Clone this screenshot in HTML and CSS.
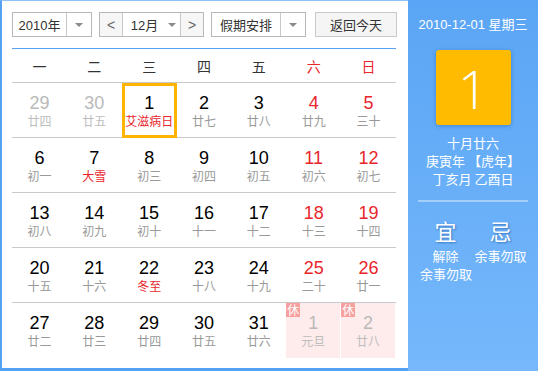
FILE: index.html
```html
<!DOCTYPE html>
<html lang="zh">
<head>
<meta charset="utf-8">
<link rel="stylesheet" href="styles.css">
</head>
<body>
<div class="cal">
  <div class="main">
    <div class="toolbar">
      <div class="sel sel-year"><span class="sel-text">2010年</span><span class="sel-arrow"><i class="tri"></i></span></div>
      <div class="sel sel-month">
        <span class="nav">&lt;</span>
        <span class="month-mid"><span class="month-text">12月</span><i class="tri"></i></span>
        <span class="nav nav-r">&gt;</span>
      </div>
      <div class="sel sel-hol"><span class="sel-text">假期安排</span><span class="sel-arrow"><i class="tri"></i></span></div>
      <div class="btn-today">返回今天</div>
    </div>
    <div class="weekhead">
      <span>一</span><span>二</span><span>三</span><span>四</span><span>五</span><span class="red">六</span><span class="red">日</span>
    </div>
    <div class="grid">
      <div class="row">
        <div class="cell other"><b>29</b><em>廿四</em></div>
        <div class="cell other"><b>30</b><em>廿五</em></div>
        <div class="cell today"><b>1</b><em class="fest">艾滋病日</em></div>
        <div class="cell"><b>2</b><em>廿七</em></div>
        <div class="cell"><b>3</b><em>廿八</em></div>
        <div class="cell wk"><b>4</b><em>廿九</em></div>
        <div class="cell wk"><b>5</b><em>三十</em></div>
      </div>
      <div class="row">
        <div class="cell"><b>6</b><em>初一</em></div>
        <div class="cell"><b>7</b><em class="fest">大雪</em></div>
        <div class="cell"><b>8</b><em>初三</em></div>
        <div class="cell"><b>9</b><em>初四</em></div>
        <div class="cell"><b>10</b><em>初五</em></div>
        <div class="cell wk"><b>11</b><em>初六</em></div>
        <div class="cell wk"><b>12</b><em>初七</em></div>
      </div>
      <div class="row">
        <div class="cell"><b>13</b><em>初八</em></div>
        <div class="cell"><b>14</b><em>初九</em></div>
        <div class="cell"><b>15</b><em>初十</em></div>
        <div class="cell"><b>16</b><em>十一</em></div>
        <div class="cell"><b>17</b><em>十二</em></div>
        <div class="cell wk"><b>18</b><em>十三</em></div>
        <div class="cell wk"><b>19</b><em>十四</em></div>
      </div>
      <div class="row">
        <div class="cell"><b>20</b><em>十五</em></div>
        <div class="cell"><b>21</b><em>十六</em></div>
        <div class="cell"><b>22</b><em class="fest">冬至</em></div>
        <div class="cell"><b>23</b><em>十八</em></div>
        <div class="cell"><b>24</b><em>十九</em></div>
        <div class="cell wk"><b>25</b><em>二十</em></div>
        <div class="cell wk"><b>26</b><em>廿一</em></div>
      </div>
      <div class="row last">
        <div class="cell"><b>27</b><em>廿二</em></div>
        <div class="cell"><b>28</b><em>廿三</em></div>
        <div class="cell"><b>29</b><em>廿四</em></div>
        <div class="cell"><b>30</b><em>廿五</em></div>
        <div class="cell"><b>31</b><em>廿六</em></div>
        <div class="cell other holiday"><span class="xiu">休</span><b>1</b><em>元旦</em></div>
        <div class="cell other holiday"><span class="xiu">休</span><b>2</b><em>廿八</em></div>
      </div>
    </div>
  </div>
  <div class="side">
    <div class="side-date">2010-12-01 星期三</div>
    <div class="bigday">1</div>
    <div class="lunar">
      <div>十月廿六</div>
      <div>庚寅年 【虎年】</div>
      <div>丁亥月 乙酉日</div>
    </div>
    <div class="divider"></div>
    <div class="yiji">
      <div class="yj-head">宜</div>
      <div class="yj-head">忌</div>
      <div class="yj-item">解除</div>
      <div class="yj-item">余事勿取</div>
      <div class="yj-extra">余事勿取</div>
    </div>
  </div>
</div>
</body>
</html>
```

FILE: styles.css
```css
* { box-sizing: border-box; margin: 0; padding: 0; }
html, body { background: #fff; }
body {
  font-family: "Liberation Sans", "Noto Sans CJK SC", sans-serif;
  width: 539px;
  height: 371px;
  overflow: hidden;
}
.cal {
  display: flex;
  width: 539px;
  height: 371px;
}
.main {
  width: 408px;
  height: 371px;
  border-left: 2px solid #55a2f2;
  border-top: 1px solid #8ec2f7;
  border-bottom: 3px solid #55a2f2;
  padding: 11px 11px 0 10px;
  background: #fff;
}
.toolbar {
  display: flex;
  height: 25px;
  font-size: 13px;
  color: #333;
}
.sel {
  display: flex;
  height: 25px;
  border: 1px solid #b8b8b8;
  background: #fff;
}
.sel-year { width: 80px; }
.sel-month { width: 105px; margin-left: 7px; }
.sel-hol { width: 95px; margin-left: 7px; }
.sel-text {
  flex: 1;
  display: flex;
  align-items: center;
  justify-content: center;
  border-right: 1px solid #c8c8c8;
  font-family: "Liberation Sans", "Noto Sans CJK SC", sans-serif;
}
.sel-arrow {
  width: 24px;
  display: flex;
  align-items: center;
  justify-content: center;
}
.tri {
  display: block;
  width: 0;
  height: 0;
  border-left: 4px solid transparent;
  border-right: 4px solid transparent;
  border-top: 4px solid #8a8a8a;
}
.nav {
  width: 23px;
  display: flex;
  align-items: center;
  justify-content: center;
  background: #f6f6f6;
  color: #666;
  font-size: 14px;
  border-right: 1px solid #c8c8c8;
}
.nav-r { border-right: 0; border-left: 1px solid #c8c8c8; }
.month-mid {
  flex: 1;
  display: flex;
  align-items: center;
  justify-content: center;
  gap: 10px;
}
.month-text { margin-left: 4px; }
.btn-today {
  margin-left: auto;
  width: 82px;
  height: 25px;
  border: 1px solid #c9c9c9;
  background: #f5f5f5;
  display: flex;
  align-items: center;
  justify-content: center;
  font-family: "Noto Sans CJK SC", sans-serif;
}
.weekhead {
  margin-top: 11px;
  width: 384px;
  height: 35px;
  border-top: 1px solid #57a3f3;
  border-bottom: 1px solid #c9c9c9;
  display: grid;
  grid-template-columns: repeat(7, 1fr);
  align-items: center;
  text-align: center;
  font-family: "Noto Sans CJK SC", sans-serif;
  font-size: 14px;
  color: #333;
}
.weekhead .red { color: #e8262c; }
.grid { width: 384px; }
.row {
  display: grid;
  grid-template-columns: repeat(7, 1fr);
  height: 55px;
  border-bottom: 1px solid #c9c9c9;
}
.row.last { border-bottom: 0; }
.cell {
  position: relative;
  display: flex;
  flex-direction: column;
  align-items: center;
  padding-top: 10px;
}
.cell b {
  font-weight: normal;
  font-family: "Liberation Sans", sans-serif;
  font-size: 18px;
  line-height: 20px;
  color: #000;
}
.cell em {
  font-style: normal;
  font-family: "Noto Sans CJK SC", sans-serif;
  font-size: 12px;
  line-height: 16px;
  color: #999;
}
.cell.wk b { color: #e8262c; }
.cell em.fest { color: #e8262c; }
.cell.other b { color: #b9b9b9; }
.cell.other em { color: #bdbdbd; }
.cell.today::after {
  content: "";
  position: absolute;
  left: 0;
  top: 0;
  right: 0;
  bottom: -1px;
  border: 3px solid #ffb400;
}
.cell.holiday {
  background: #fdeceb;
  margin-right: 1px;
}
.xiu {
  position: absolute;
  left: 0;
  top: 0;
  width: 14px;
  height: 14px;
  background: #f7a19f;
  color: #fff;
  font-family: "Noto Sans CJK SC", sans-serif;
  font-size: 12px;
  line-height: 14px;
  text-align: center;
}
.side {
  width: 130px;
  height: 371px;
  background: linear-gradient(#5aa5f5, #76b8fb);
  color: #fff;
  padding-top: 16px;
  display: flex;
  flex-direction: column;
  align-items: center;
}
.side-date {
  font-size: 13px;
  line-height: 18px;
  font-family: "Liberation Sans", "Noto Sans CJK SC", sans-serif;
}
.bigday {
  margin-top: 16px;
  width: 75px;
  height: 75px;
  background: #ffbb00;
  border-radius: 3px;
  box-shadow: 0 1px 4px rgba(0, 60, 140, 0.35);
  display: flex;
  align-items: center;
  justify-content: center;
  font-family: "Open Sans", "Liberation Sans", sans-serif;
  font-weight: 300;
  font-size: 54px;
  line-height: 1;
}
.lunar {
  margin-top: 9px;
  font-family: "Noto Sans CJK SC", sans-serif;
  font-size: 13px;
  line-height: 18px;
  text-align: center;
}
.divider {
  margin-top: 12px;
  width: 110px;
  height: 2px;
  background: #a4cffb;
}
.yiji {
  margin-top: 15px;
  width: 110px;
  display: grid;
  grid-template-columns: 55px 55px;
  font-family: "Noto Sans CJK SC", sans-serif;
  text-align: center;
}
.yj-head {
  font-size: 22px;
  line-height: 26px;
  text-shadow: 1px 1px 2px rgba(0, 50, 120, 0.45);
}
.yj-item {
  margin-top: 4px;
  font-size: 13px;
  line-height: 18px;
}
.yj-extra {
  grid-column: 1 / 3;
  text-align: left;
  padding-left: 2px;
  font-size: 13px;
  line-height: 18px;
}
```
